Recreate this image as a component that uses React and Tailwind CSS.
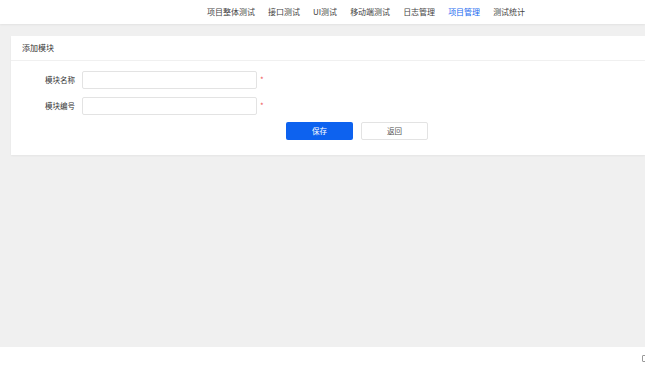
import React from "react";

const font = { fontFamily: '"Noto Sans CJK SC", "Noto Sans", sans-serif' };

export default function App() {
  const nav = ["项目整体测试", "接口测试", "UI测试", "移动端测试", "日志管理", "项目管理", "测试统计"];
  return (
    <div className="flex h-[368px] w-[645px] flex-col overflow-hidden bg-[#f0f0f0]" style={font}>
      <header className="flex h-[24px] shrink-0 items-center bg-white pl-[207px] shadow-[0_1px_2px_rgba(0,0,0,0.06)]">
        <nav className="flex gap-[13px] text-[8px] leading-none text-[#444]">
          {nav.map((n) => (
            <span key={n} className={n === "项目管理" ? "text-[#1a6bf0]" : ""}>
              {n}
            </span>
          ))}
        </nav>
      </header>
      <main className="flex-1 pl-[11px] pt-[12px]">
        <section className="h-[119px] bg-white shadow-[0_1px_2px_rgba(0,0,0,0.05)]">
          <div className="flex h-[25px] items-center border-b border-[#f0f0f0] pl-[11px] text-[8px] text-[#333]">
            添加模块
          </div>
          <div className="flex flex-col gap-[8px] pt-[10px]">
            {["模块名称", "模块编号"].map((l) => (
              <div key={l} className="flex h-[18px] items-center">
                <label className="w-[64px] pr-0 text-right text-[7.5px] text-[#333]">{l}</label>
                <input className="ml-[7px] h-[18px] w-[175px] rounded-[2px] border border-[#e3e3e3] bg-white outline-none" />
                <span className="ml-[3px] text-[8px] leading-none text-[#f05a5a]">*</span>
              </div>
            ))}
          </div>
          <div className="mt-[7px] flex gap-[8px] pl-[275px]">
            <button className="h-[18px] w-[67px] rounded-[2px] bg-[#0d62ef] text-[7.5px] leading-none text-white">
              保存
            </button>
            <button className="h-[18px] w-[67px] rounded-[2px] border border-[#e3e3e3] bg-white text-[7.5px] leading-none text-[#555]">
              返回
            </button>
          </div>
        </section>
      </main>
      <footer className="relative h-[21px] shrink-0 bg-white">
        <span className="absolute right-[-3px] top-[8px] h-[7px] w-[6px] rounded-[1px] border border-[#999]" />
      </footer>
    </div>
  );
}
